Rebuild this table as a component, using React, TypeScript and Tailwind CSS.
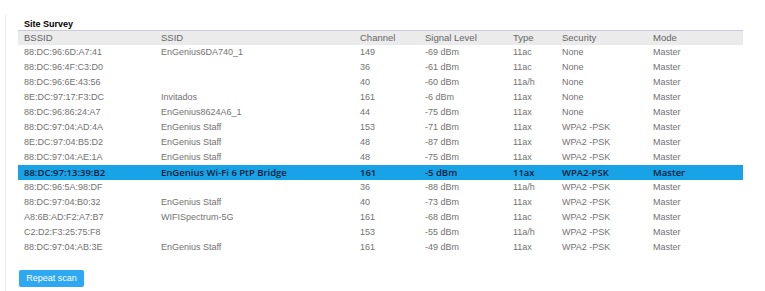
import React from "react";

const rows: string[][] = [
  ["88:DC:96:6D:A7:41", "EnGenius6DA740_1", "149", "-69 dBm", "11ac", "None", "Master"],
  ["88:DC:96:4F:C3:D0", "", "36", "-61 dBm", "11ac", "None", "Master"],
  ["88:DC:96:6E:43:56", "", "40", "-60 dBm", "11a/h", "None", "Master"],
  ["8E:DC:97:17:F3:DC", "Invitados", "161", "-6 dBm", "11ax", "None", "Master"],
  ["88:DC:96:86:24:A7", "EnGenius8624A6_1", "44", "-75 dBm", "11ax", "None", "Master"],
  ["88:DC:97:04:AD:4A", "EnGenius Staff", "153", "-71 dBm", "11ax", "WPA2 -PSK", "Master"],
  ["8E:DC:97:04:B5:D2", "EnGenius Staff", "48", "-87 dBm", "11ax", "WPA2 -PSK", "Master"],
  ["88:DC:97:04:AE:1A", "EnGenius Staff", "48", "-75 dBm", "11ax", "WPA2 -PSK", "Master"],
  ["88:DC:97:13:39:B2", "EnGenius Wi-Fi 6 PtP Bridge", "161", "-5 dBm", "11ax", "WPA2-PSK", "Master"],
  ["88:DC:96:5A:98:DF", "", "36", "-88 dBm", "11a/h", "WPA2 -PSK", "Master"],
  ["88:DC:97:04:B0:32", "EnGenius Staff", "40", "-73 dBm", "11ax", "WPA2 -PSK", "Master"],
  ["A8:6B:AD:F2:A7:B7", "WIFISpectrum-5G", "161", "-68 dBm", "11ac", "WPA2 -PSK", "Master"],
  ["C2:D2:F3:25:75:F8", "", "153", "-55 dBm", "11a/h", "WPA2 -PSK", "Master"],
  ["88:DC:97:04:AB:3E", "EnGenius Staff", "161", "-49 dBm", "11ax", "WPA2 -PSK", "Master"],
];

const headers = ["BSSID", "SSID", "Channel", "Signal Level", "Type", "Security", "Mode"];
const grid = "grid grid-cols-[137px_199px_65px_88px_49px_91px_1fr]";

export default function App() {
  return (
    <div className="w-[765px] h-[291px] bg-white overflow-hidden" style={{ fontFamily: '"Liberation Sans", Arial, sans-serif' }}>
      <div className="ml-[5px] mt-[15px] h-[276px] border-l border-[#ececec] pl-[12px] pr-[22px]">
        <div className="pl-[6px] h-[15px] flex items-end pb-[1px] text-[9px] font-bold text-black leading-none">Site Survey</div>
        <div className={`${grid} pl-[6px] h-[15px] items-center bg-[#ebebeb] border-t border-[#c9ccd8] text-[9.5px] text-[#666] leading-none`}>
          {headers.map((h) => (
            <div key={h}>{h}</div>
          ))}
        </div>
        {rows.map((r, i) => {
          const hl = i === 8;
          return (
            <div
              key={i}
              className={
                hl
                  ? `${grid} pl-[6px] h-[15px] items-center bg-[#17a3e6] text-[9.5px] font-semibold text-[#0b1d3c] leading-none`
                  : `${grid} pl-[6px] h-[15px] items-center text-[9px] text-[#727272] leading-none`
              }
              style={hl ? { fontFamily: '"Open Sans", sans-serif' } : undefined}
            >
              {r.map((c, j) => (
                <div key={j} className="whitespace-nowrap">{c}</div>
              ))}
            </div>
          );
        })}
        <button className="mt-[15px] ml-[1px] w-[65px] h-[17px] rounded-[2px] bg-[#2ea8f0] text-white text-[9px] leading-none flex items-center justify-center">
          Repeat scan
        </button>
      </div>
    </div>
  );
}
